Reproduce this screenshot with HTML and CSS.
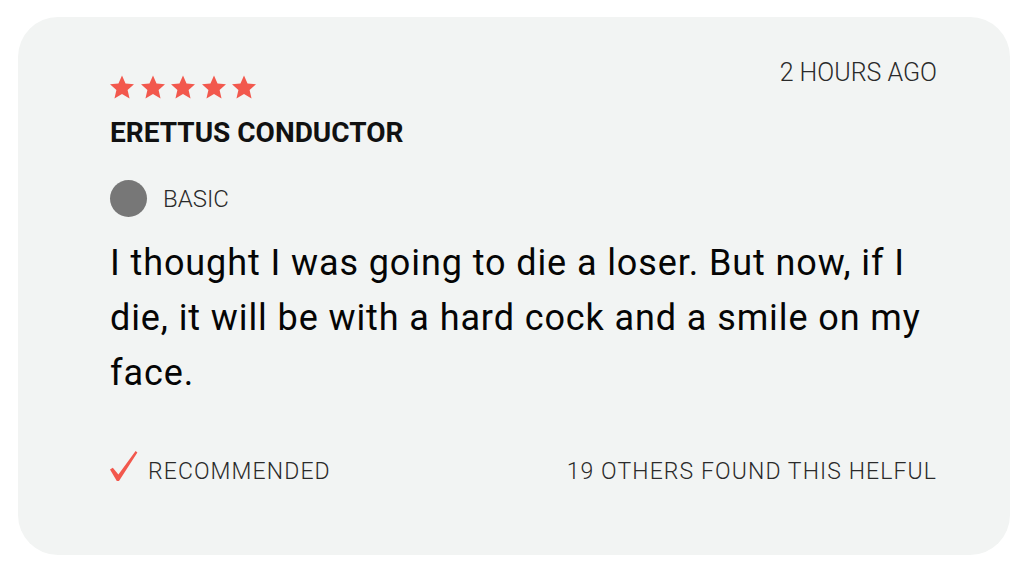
FILE: index.html
```html
<!DOCTYPE html>
<html lang="en">

<head>
  <meta charset="UTF-8">
  <meta name="viewport" content="width=device-width, initial-scale=1.0">
  <title>Review</title>
  <link rel="stylesheet" href="styles.css">
</head>

<body>
  <div class="card">
    <div class="top">
      <div class="who">
        <div class="stars">
          <svg viewBox="1.5 1 21 21"><path d="M12 1.5l3.1 6.9 7.4.7-5.6 5 1.7 7.4L12 17.6l-6.6 3.9 1.7-7.4-5.6-5 7.4-.7z"/></svg>
          <svg viewBox="1.5 1 21 21"><path d="M12 1.5l3.1 6.9 7.4.7-5.6 5 1.7 7.4L12 17.6l-6.6 3.9 1.7-7.4-5.6-5 7.4-.7z"/></svg>
          <svg viewBox="1.5 1 21 21"><path d="M12 1.5l3.1 6.9 7.4.7-5.6 5 1.7 7.4L12 17.6l-6.6 3.9 1.7-7.4-5.6-5 7.4-.7z"/></svg>
          <svg viewBox="1.5 1 21 21"><path d="M12 1.5l3.1 6.9 7.4.7-5.6 5 1.7 7.4L12 17.6l-6.6 3.9 1.7-7.4-5.6-5 7.4-.7z"/></svg>
          <svg viewBox="1.5 1 21 21"><path d="M12 1.5l3.1 6.9 7.4.7-5.6 5 1.7 7.4L12 17.6l-6.6 3.9 1.7-7.4-5.6-5 7.4-.7z"/></svg>
        </div>
        <h2 class="name">ERETTUS CONDUCTOR</h2>
        <div class="badge">
          <span class="dot"></span>
          <span class="label">BASIC</span>
        </div>
      </div>
      <span class="time">2 HOURS AGO</span>
    </div>

    <p class="text">I thought I was going to die a loser. But now, if I die, it will be with a hard cock and a smile on my face.</p>

    <div class="footer">
      <div class="rec">
        <svg class="check" viewBox="0 0 28 30"><path d="M0 18.5L2.8 16.8 8.4 23.6 25.6 0 27.4 1.4 9 30 6.8 30z"/></svg>
        <span class="label">RECOMMENDED</span>
      </div>
      <span class="label">19 OTHERS FOUND THIS HELFUL</span>
    </div>
  </div>
</body>

</html>
```

FILE: styles.css
```css
body {
  background-color: #fff;
  font-family: 'Roboto', 'Liberation Sans', sans-serif;
  margin: 0;
  padding: 17px 14px 0 18px;
}

.card {
  background-color: #f2f4f3;
  border-radius: 40px;
  width: 992px;
  height: 538px;
  box-sizing: border-box;
  padding: 41px 73px 0 92px;
}

.top {
  display: flex;
  justify-content: space-between;
  align-items: flex-start;
}

.stars {
  display: flex;
  gap: 6.5px;
  margin-top: 17px;
  height: 24px;
}

.stars svg {
  width: 24px;
  height: 24px;
  fill: #f2584d;
}

.name {
  margin: 18px 0 0;
  font-size: 28px;
  line-height: 32px;
  font-weight: 700;
  color: #111;
}

.badge {
  display: flex;
  align-items: center;
  gap: 16px;
  margin-top: 31px;
}

.dot {
  width: 37px;
  height: 37px;
  border-radius: 50%;
  background-color: #777;
}

.label {
  font-size: 23px;
  line-height: 28px;
  font-weight: 300;
  color: #2a2a2a;
}

.badge .label {
  font-size: 24px;
}

.footer .label {
  letter-spacing: 1.1px;
}

.time {
  font-size: 25px;
  line-height: 30px;
  font-weight: 300;
  color: #2a2a2a;
}

.text {
  margin: 19px 0 0;
  font-size: 36px;
  line-height: 55px;
  letter-spacing: 0.9px;
  color: #050505;
}

.footer {
  display: flex;
  justify-content: space-between;
  align-items: flex-end;
  margin-top: 50px;
}

.rec {
  display: flex;
  align-items: flex-end;
  gap: 10px;
}

.check {
  width: 28px;
  height: 30px;
  fill: #f2584d;
  margin-bottom: 5px;
}
```
